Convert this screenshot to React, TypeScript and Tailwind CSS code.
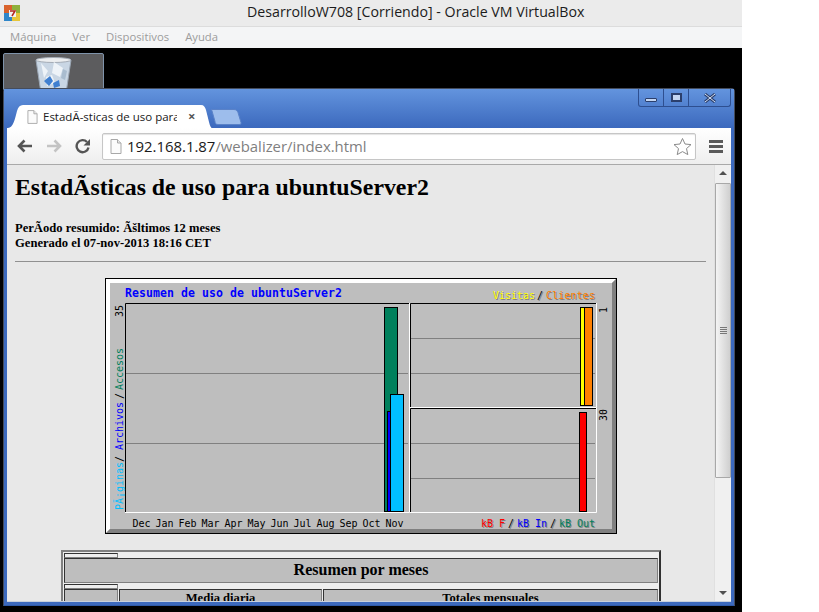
const months = ["Dec", "Jan", "Feb", "Mar", "Apr", "May", "Jun", "Jul", "Aug", "Sep", "Oct", "Nov"];

function PageIcon({ className }: { className: string }) {
  return (
    <svg className={className} viewBox="0 0 12 15" fill="none">
      <path d="M1 .5h6.500l3.500 3.500v10.500H1z" fill="#fbfbfb" stroke="#a8a8a8" />
      <path d="M7.500 .5v3.500H11" fill="#e8e8e8" stroke="#a8a8a8" />
    </svg>
  );
}

function VBoxLogo() {
  return (
    <svg className="h-4 w-4" viewBox="0 0 16 16">
      <rect x="0" y="0" width="8" height="8" fill="#d9622b" />
      <rect x="8" y="0" width="8" height="8" fill="#8fb03c" />
      <rect x="0" y="8" width="8" height="8" fill="#2f86c9" />
      <rect x="8" y="8" width="8" height="8" fill="#e6c63a" />
      <rect x="5" y="5" width="7" height="7" fill="#f2f2f2" />
      <path d="M6 6h5l-3 5" fill="none" stroke="#b3261e" strokeWidth="1.500" />
    </svg>
  );
}

function RecycleBin() {
  return (
    <svg className="mt-[3px] h-[31px] w-[37px]" viewBox="0 0 37 31">
      <path d="M1 3 L6 36 H31 L36 3 Z" fill="#c9d6e4" stroke="#9aa6b4" />
      <ellipse cx="18.500" cy="3" rx="17.500" ry="2.500" fill="#eceef0" stroke="#a4acb6" />
      <path d="M6 6l7 8-4 7zM19 5l9 6-3 9-8-4zM11 20l6-2 3 8-8 3z" fill="#eef3f8" />
      <path d="M28 12l4 2-2 9-4-2z" fill="#a9bccf" />
      <path d="M9 24l6-5 3 5-4 5zM18 26l6-3 1 6-6 2z" fill="#3f7fd0" />
    </svg>
  );
}

function Toolbar() {
  return (
    <div className="flex h-[37px] items-center border-b border-[#a9a9a9] bg-linear-to-b from-[#ffffff] to-[#eeeeee]">
      <svg className="ml-[9px] h-[16px] w-[17px]" viewBox="0 0 17 16" fill="none" stroke="#555555" strokeWidth="2.600">
        <path d="M16 8H3M8.500 2.500 3 8l5.500 5.500" />
      </svg>
      <svg className="ml-[13px] h-[16px] w-[17px]" viewBox="0 0 17 16" fill="none" stroke="#c4c4c4" strokeWidth="2.600">
        <path d="M1 8h13M8.500 2.500 14 8l-5.500 5.500" />
      </svg>
      <svg className="ml-[12px] h-[16px] w-[16px]" viewBox="0 0 16 16" fill="none">
        <path d="M13.500 9.500A6 6 0 1 1 12 4" stroke="#555555" strokeWidth="2.400" />
        <path d="M15 1v6.500H8.500z" fill="#555555" />
      </svg>
      <div className="ml-[11px] flex h-[27px] w-[594px] items-center rounded-[2px] border border-[#c6c6c6] bg-white font-['Open_Sans'] text-[14.900px] shadow-[inset_0_1px_1px_#e4e4e4]">
        <PageIcon className="ml-[7px] h-[15px] w-[12px] shrink-0" />
        <span className="ml-[5px] text-[#1a1a1a]">192.168.1.87</span>
        <span className="text-[#7f7f7f]">/webalizer/index.html</span>
        <svg className="ml-auto mr-[3px] h-[19px] w-[19px]" viewBox="0 0 19 19" fill="#ffffff" stroke="#8a8a8a">
          <path d="M9.500 1.500 12 7l6 .6-4.500 4 1.300 6-5.300-3-5.300 3 1.300-6L1 7.600 7 7z" />
        </svg>
      </div>
      <div className="ml-[13px] flex w-[14px] flex-col gap-[2px]">
        <div className="h-[3px] bg-[#5a5a5a]" />
        <div className="h-[3px] bg-[#5a5a5a]" />
        <div className="h-[3px] bg-[#5a5a5a]" />
      </div>
    </div>
  );
}

// label with the pale drop shadow the chart image has
function ShadowText({ x, y, fill, children, length }: { x: number; y: number; fill: string; children: string; length?: number }) {
  return (
    <>
      <text x={x + 1} y={y + 1} fontSize="10" fill="#808080" textLength={length}>{children}</text>
      <text x={x} y={y} fontSize="10" fill={fill} textLength={length}>{children}</text>
    </>
  );
}

function Plot({ x, y, w, h }: { x: number; y: number; w: number; h: number }) {
  return (
    <>
      <path d={`M${x + 0.5} ${y + h}V${y + 0.5}H${x + w}`} fill="none" stroke="#000000" />
      <path d={`M${x + w - 0.5} ${y}V${y + h - 0.5}H${x}`} fill="none" stroke="#ffffff" />
    </>
  );
}

function UsageChart() {
  return (
    <svg className="ml-[90px] block h-[256px] w-[512px]" viewBox="0 0 512 256" fontFamily="'DejaVu Sans Mono', monospace">
      <rect x="0.500" y="0.500" width="511" height="255" fill="#bebebe" stroke="#000000" />
      <path d="M1 1h510l-4 4H5v246l-4 4z" fill="#ffffff" />
      <path d="M511 1v254H1l4-4h502V5z" fill="#808080" />
      <text x="20" y="19" fontSize="11.500" fontWeight="700" fill="#0000ff" textLength="217">Resumen de uso de ubuntuServer2</text>
      <ShadowText x={388} y={21} fill="#ffff00" length={42}>Visitas</ShadowText>
      <ShadowText x={432} y={21} fill="#000000">/</ShadowText>
      <ShadowText x={441} y={21} fill="#ff8000" length={49}>Clientes</ShadowText>

      {/* plots */}
      <path d="M21 95.500h282M21 165.500h282" stroke="#808080" />
      <rect x="279.500" y="29.500" width="13" height="204" fill="#00805c" stroke="#000000" />
      <rect x="282.500" y="133.500" width="4" height="100" fill="#0000ff" stroke="#000000" />
      <rect x="285.500" y="116.500" width="13" height="117" fill="#00bfff" stroke="#000000" />
      <Plot x={20} y={25} w={285} h={210} />

      <path d="M306 60.500h184M306 95.500h184M306 165.500h184M306 200.500h184" stroke="#808080" />
      <rect x="475.500" y="29.500" width="12" height="98" fill="#ffff00" stroke="#000000" />
      <rect x="479.500" y="29.500" width="8" height="98" fill="#ff8000" stroke="#000000" />
      <rect x="474.500" y="134.500" width="7" height="99" fill="#ff0000" stroke="#000000" />
      <Plot x={305} y={25} w={187} h={105} />
      <Plot x={305} y={130} w={187} h={105} />

      {months.map((m, i) => (
        <text key={m} x={27.500 + i * 23} y="249" fontSize="10" fill="#000000" textLength="18">{m}</text>
      ))}
      <ShadowText x={376} y={249} fill="#ff0000">kB F</ShadowText>
      <ShadowText x={403} y={249} fill="#000000">/</ShadowText>
      <ShadowText x={412} y={249} fill="#0000ff" length={30}>kB In</ShadowText>
      <ShadowText x={445} y={249} fill="#000000">/</ShadowText>
      <ShadowText x={454} y={249} fill="#00805c" length={36}>kB Out</ShadowText>

      {/* rotated axis labels */}
      <text transform="translate(18 39) rotate(-90)" fontSize="10" fill="#000000" textLength="12">35</text>
      <text transform="translate(18 112) rotate(-90)" fontSize="10" fill="#00805c" textLength="42">Accesos</text>
      <text transform="translate(18 121) rotate(-90)" fontSize="10" fill="#000000">/</text>
      <text transform="translate(18 172) rotate(-90)" fontSize="10" fill="#0000ff" textLength="48">Archivos</text>
      <text transform="translate(18 184) rotate(-90)" fontSize="10" fill="#000000">/</text>
      <text transform="translate(18 232) rotate(-90)" fontSize="10" fill="#00bfff" textLength="48">PÃ¡ginas</text>
      <text transform="translate(502 35) rotate(-90)" fontSize="10" fill="#000000">1</text>
      <text transform="translate(502 143) rotate(-90)" fontSize="10" fill="#000000" textLength="12">30</text>
    </svg>
  );
}

function MonthsTable() {
  return (
    <div className="ml-[46px] mt-[16px] w-[600px] border-[2px] border-t-[#808080] border-r-[#303030] border-b-[#303030] border-l-[#808080] bg-[#eeeeee] px-[1px] pt-[1px] font-['Liberation_Serif'] font-bold text-black">
      <div className="h-[5px] w-[54px] border border-[#333333] border-b-[#808080] border-r-[#808080]" />
      <div className="flex h-[25px] items-center justify-center border border-t-[#333333] border-l-[#333333] border-r-[#808080] border-b-[#808080] bg-[#bebebe] pb-[1px] text-[16px]">
        Resumen por meses
      </div>
      <div className="mt-[1px] h-[5px] w-[54px] border border-[#333333] border-b-[#808080] border-r-[#808080]" />
      <div className="flex h-[30px] gap-[1px] text-[12.600px] leading-[14px]">
        <div className="w-[54px] border border-t-[#333333] border-l-[#333333] border-r-[#808080] border-b-[#808080] bg-[#bebebe]" />
        <div className="w-[203px] border border-t-[#333333] border-l-[#333333] border-r-[#808080] border-b-[#808080] bg-[#bebebe] pt-[1px] text-center">
          Media diaria
        </div>
        <div className="flex-1 border border-t-[#333333] border-l-[#333333] border-r-[#808080] border-b-[#808080] bg-[#bebebe] pt-[1px] text-center">
          Totales mensuales
        </div>
      </div>
    </div>
  );
}

function Scrollbar() {
  return (
    <div className="flex w-[17px] shrink-0 flex-col items-center border-l border-[#e0e0e0] bg-[#f0f0f0]">
      <div className="mt-[6px] h-0 w-0 border-x-[4px] border-b-[4px] border-x-transparent border-b-[#505050]" />
      <div className="mt-[8px] flex h-[295px] w-[16px] items-center justify-center rounded-[1px] border border-[#a8a8a8] bg-linear-to-r from-[#f4f4f4] to-[#cfcfcf]">
        <div className="flex w-[7px] flex-col gap-[1px]">
          <div className="h-px bg-[#777777]" />
          <div className="h-px bg-[#777777]" />
          <div className="h-px bg-[#777777]" />
          <div className="h-px bg-[#777777]" />
        </div>
      </div>
      <div className="mt-auto mb-[6px] h-0 w-0 border-x-[4px] border-t-[4px] border-x-transparent border-t-[#505050]" />
    </div>
  );
}

function BrowserWindow() {
  return (
    <div className="absolute left-[3px] top-[40px] flex h-[518px] w-[732px] flex-col rounded-t-[4px] border border-[#444c5c] border-b-[#2f5aa8] bg-[#3c69bd]">
      <div className="absolute right-[3px] top-0 flex h-[18px] w-[93px] rounded-b-[3px] border border-t-0 border-[#2e4f90]">
        <div className="flex w-[25px] items-end justify-center border-r border-[#2e4f90] pb-[4px]">
          <div className="h-[4px] w-[12px] rounded-[1px] border border-[#2b3f6c] bg-[#c4d6f2]" />
        </div>
        <div className="flex w-[25px] items-center justify-center border-r border-[#2e4f90]">
          <div className="h-[9px] w-[11px] border-2 border-[#2b3f6c] bg-[#c4d6f2]" />
        </div>
        <div className="flex flex-1 items-center justify-center">
          <svg className="h-[10px] w-[14px]" viewBox="0 0 14 10" fill="none">
            <path d="M2 1l10 8M12 1 2 9" stroke="#2b3f6c" strokeWidth="3" />
            <path d="M2 1l10 8M12 1 2 9" stroke="#d6e2f6" strokeWidth="1" />
          </svg>
        </div>
      </div>

      <div className="flex h-[39px] shrink-0 items-end bg-linear-to-b from-[#6394de] to-[#3c69bd] pl-[2px]">
        <div className="relative h-[23px] w-[206px]">
          <svg className="absolute inset-0 h-full w-full" viewBox="0 0 206 23">
            <path d="M2 23C7 23 9 14 11 6c1-4 3-6 6-6h178c3 0 4 2 5 5l3 12c1 4 2 6 3 6z" fill="#ffffff" />
          </svg>
          <div className="relative flex h-full items-center pl-[21px] font-['Open_Sans'] text-[11.500px] text-[#202020]">
            <PageIcon className="h-[14px] w-[11px] shrink-0" />
            <span className="ml-[5px] w-[134px] overflow-hidden whitespace-nowrap">EstadÃ-sticas de uso para</span>
            <span className="ml-[11px] text-[13px] font-bold leading-none text-[#555555]">×</span>
          </div>
        </div>
        <svg className="-ml-[1px] mb-[3px] h-[16px] w-[31px]" viewBox="0 0 31 16">
          <path d="M1 .5h22c2 0 3 1 4 3l3 10c.4 1.500-.5 2-2 2H7c-2 0-3-1-3-3L1 2C.6 1 .5.500 1 .5z" fill="#9dbdec" stroke="#5a82c8" />
        </svg>
      </div>

      <div className="mx-[3px] mb-[3px] flex min-h-0 flex-1 flex-col border-b border-[#c8d0dc]">
        <Toolbar />
        <div className="flex min-h-0 flex-1">
          <div className="min-w-0 flex-1 overflow-hidden bg-[#e8e8e8] px-[8px] font-['Liberation_Serif'] text-black">
            <h1 className="mt-[9px] text-[23.800px] font-bold leading-[27px]">EstadÃ{"\u00AD"}sticas de uso para ubuntuServer2</h1>
            <div className="mt-[20px] text-[12.600px] font-bold leading-[15px]">
              <p>PerÃ{"\u00AD"}odo resumido: Ãšltimos 12 meses</p>
              <p>Generado el 07-nov-2013 18:16 CET</p>
            </div>
            <hr className="mt-[10px] border-t border-[#909090] border-b-0" />
            <div className="mt-[16px]">
              <UsageChart />
            </div>
            <MonthsTable />
          </div>
          <Scrollbar />
        </div>
      </div>
    </div>
  );
}

export default function App() {
  return (
    <div className="h-[612px] w-[819px] overflow-hidden bg-white">
      <div className="flex h-full w-[742px] flex-col">
        <div className="flex h-[27px] shrink-0 items-center border-b border-[#dcdcdc] bg-[#ebebeb] pl-[4px]">
          <VBoxLogo />
          <div className="ml-[227px] whitespace-nowrap pb-[3px] font-['Open_Sans'] text-[14.200px] text-[#1c1c1c]">
            DesarrolloW708 [Corriendo] - Oracle VM VirtualBox
          </div>
        </div>
        <div className="flex h-[21px] shrink-0 items-center gap-[16px] bg-[#f4f5f6] pl-[10px] font-['Open_Sans'] text-[11.300px] text-[#9c9c9c]">
          <span>Máquina</span>
          <span>Ver</span>
          <span>Dispositivos</span>
          <span>Ayuda</span>
        </div>
        <div className="relative min-h-0 flex-1 bg-black">
          <div className="absolute left-[3px] top-[5px] flex h-[37px] w-[101px] justify-center rounded-t-[2px] border border-[#7f93aa] bg-[#5c5c5e]">
            <RecycleBin />
          </div>
          <BrowserWindow />
        </div>
      </div>
    </div>
  );
}
